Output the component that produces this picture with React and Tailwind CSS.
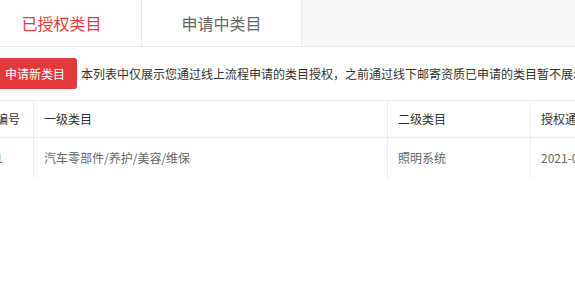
const font = { fontFamily: '"Noto Sans CJK SC", "Noto Sans", sans-serif' };

function Tabs() {
  return (
    <div className="flex h-[47px] border-b border-[#e8e8e8] bg-[#f7f7f7]">
      <div className="-ml-[18px] flex w-[160px] items-center justify-center border-r border-[#e8e8e8] bg-white text-[16px] text-[#e4393c]">
        已授权类目
      </div>
      <div className="flex w-[160px] items-center justify-center border-r border-[#e8e8e8] bg-white text-[16px] text-[#666]">
        申请中类目
      </div>
    </div>
  );
}

function Toolbar() {
  return (
    <div className="mt-[11px] flex items-center whitespace-nowrap">
      <button className="-ml-[7px] h-[31px] rounded-[3px] bg-[#e4393c] px-3 text-[12px] text-white">
        申请新类目
      </button>
      <span className="ml-[4px] text-[12px] text-[#333]">
        本列表中仅展示您通过线上流程申请的类目授权，之前通过线下邮寄资质已申请的类目暂不展示
      </span>
    </div>
  );
}

function Table() {
  const cols = ["w-[47px]", "w-[354px]", "w-[143px]", "w-[200px]"];
  const head = ["编号", "一级类目", "二级类目", "授权通过时间"];
  const row = ["1", "汽车零部件/养护/美容/维保", "照明系统", "2021-03-15 10:22:31"];
  return (
    <div className="-ml-[14px] mt-[11px] w-[760px] text-[12px]">
      <div className="flex h-[38px] border-y border-[#ececec] text-[#333]">
        {head.map((h, i) => (
          <div
            key={h}
            className={`${cols[i]} flex shrink-0 items-center whitespace-nowrap px-[10px] ${i > 0 ? "border-l border-[#ececec]" : ""}`}
          >
            {h}
          </div>
        ))}
      </div>
      <div className="flex h-[40px] text-[#666]">
        {row.map((c, i) => (
          <div
            key={i}
            className={`${cols[i]} flex shrink-0 items-center whitespace-nowrap px-[10px] ${i > 0 ? "border-l border-[#ececec]" : ""}`}
          >
            {c}
          </div>
        ))}
      </div>
    </div>
  );
}

export default function App() {
  return (
    <div className="h-[296px] w-[575px] overflow-hidden bg-white" style={font}>
      <Tabs />
      <Toolbar />
      <Table />
    </div>
  );
}
